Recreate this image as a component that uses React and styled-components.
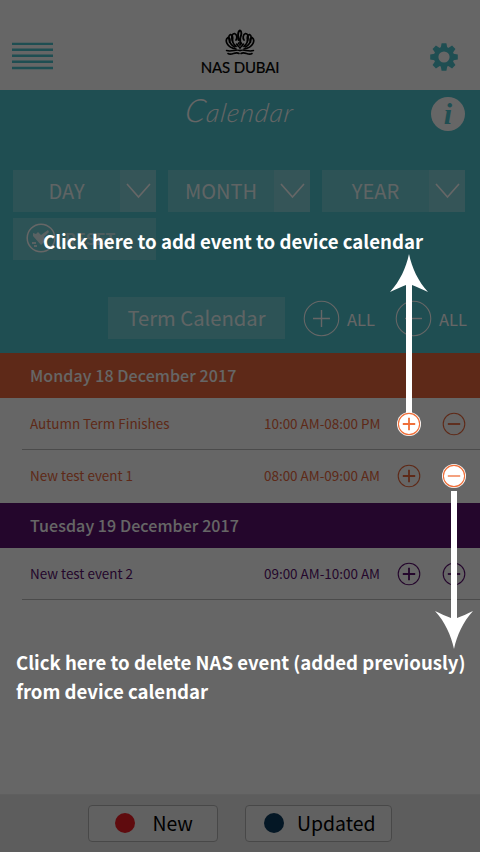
import React from "react";
import styled, { createGlobalStyle } from "styled-components";

const Global = createGlobalStyle`
  *, *::before, *::after { box-sizing: border-box; }
  body { margin: 0; background: #666; }
`;

const Screen = styled.main`
  position: relative;
  width: 480px;
  height: 852px;
  overflow: hidden;
  display: flex;
  flex-direction: column;
  background: #fff;
  font-family: "Noto Sans CJK SC", "Open Sans", sans-serif;
`;

const TopBar = styled.header`
  height: 90px;
  flex: none;
  display: grid;
  grid-template-columns: 41px 1fr 41px;
  padding: 28px 15px 0 12px;
`;

const MenuIcon = styled.svg`
  display: block;
  width: 41px;
  height: 28px;
  margin-top: 14px;
`;

const Brand = styled.div`
  display: flex;
  flex-direction: column;
  align-items: center;
  padding-left: 3px;
`;

const Crown = styled.svg`
  display: block;
  width: 32px;
  height: 29px;
`;

const BrandName = styled.span`
  font: 400 15px/20px Lato, sans-serif;
  letter-spacing: -0.15px;
  white-space: nowrap;
  color: #000;
  -webkit-text-stroke: 0.2px #000;
`;

const GearIcon = styled.svg`
  display: block;
  width: 30px;
  height: 30px;
  margin: 14px 0 0 auto;
  margin-right: 6px;
`;

const Panel = styled.section`
  height: 263px;
  flex: none;
  background: #4ec3cd;
  color: #fff;
`;

const TitleRow = styled.div`
  height: 80px;
  display: grid;
  grid-template-columns: 60px 1fr 60px;
  padding-top: 6px;
`;

const Title = styled.h1`
  margin: -4px 0 0 0;
  height: 36px;
  text-align: center;
  font: italic 300 26px/36px Lato, sans-serif;
  letter-spacing: 1.2px;
  transform: skewX(-8deg);
  &::first-letter { font-size: 32px; }
`;

const InfoBadge = styled.span`
  width: 34px;
  height: 34px;
  margin: 1px 0 0 11px;
  border-radius: 50%;
  background: #fff;
  color: #4ec3cd;
  text-align: center;
  font: italic 700 30px/33px "Liberation Serif", serif;
`;

const Filters = styled.div`
  display: grid;
  grid-template-columns: 143px 142px 143px;
  gap: 6px 12px;
  padding-left: 13px;
`;

const Select = styled.div`
  height: 42px;
  display: grid;
  grid-template-columns: 1fr 36px;
  background: rgba(255, 255, 255, 0.2);
`;

const SelectLabel = styled.span`
  text-align: center;
  font-size: 20px;
  line-height: 41px;
  color: rgba(255, 255, 255, 0.9);
`;

const SelectArrow = styled.span`
  display: flex;
  background: rgba(255, 255, 255, 0.14);
`;

const ResetButton = styled.div`
  height: 42px;
  display: flex;
  align-items: center;
  padding: 0 0 2px 13px;
  gap: 9px;
  background: rgba(255, 255, 255, 0.2);
  font-size: 16px;
  font-weight: 700;
  line-height: 40px;
  color: rgba(255, 255, 255, 0.6);
`;

const Actions = styled.div`
  display: flex;
  align-items: center;
  margin: 37px 0 0 108px;
  height: 42px;
`;

const TermButton = styled.div`
  width: 177px;
  flex: none;
  height: 42px;
  text-align: center;
  font-size: 20.2px;
  line-height: 41px;
  background: rgba(255, 255, 255, 0.2);
  color: rgba(255, 255, 255, 0.9);
`;

const AllAction = styled.div`
  display: flex;
  align-items: center;
  width: 92px;
  flex: none;
  gap: 7px;
  font-size: 16.5px;
  line-height: 40px;
  &:nth-child(2) { margin-left: 18px; }
`;

const AllLabel = styled.span`
  padding-top: 2px;
`;

const DayHeading = styled.h2`
  margin: 0;
  height: 45px;
  flex: none;
  padding-left: 30px;
  font-size: 16px;
  font-weight: 500;
  line-height: 44px;
  letter-spacing: 0.08px;
  color: #fff;
  background: ${(p) => p.$color};
`;

const EventRow = styled.div`
  height: ${(p) => p.$height}px;
  flex: none;
  margin-left: 22px;
  padding-left: 8px;
  display: grid;
  grid-template-columns: 1fr 121px 47px 48px;
  font-size: 13.45px;
  line-height: 51px;
  white-space: nowrap;
  color: ${(p) => p.$color};
  border-bottom: ${(p) => (p.$line ? "1px solid #bbb" : "0")};
`;

const EventTime = styled.span`
  width: 117px;
`;

const IconCell = styled.span`
  display: flex;
  align-items: center;
  justify-content: center;
  padding-right: ${(p) => p.$inset || 0}px;
  height: 52px;
`;

const Legend = styled.footer`
  height: 58px;
  margin-top: auto;
  display: flex;
  gap: 27px;
  padding: 10px 0 0 88px;
  background: #e9e9e9;
  border-top: 1px solid #ededed;
`;

const LegendItem = styled.div`
  width: ${(p) => p.$width}px;
  height: 37px;
  display: flex;
  align-items: center;
  padding: 0 0 1px ${(p) => p.$pad}px;
  gap: ${(p) => p.$gap}px;
  border: 1.5px solid #b5b5b5;
  border-radius: 4px;
  background: #f2f2f2;
  color: #000;
  font-size: 19.4px;
  line-height: 32px;
`;

const Dot = styled.i`
  width: 20px;
  height: 20px;
  border-radius: 50%;
  background: ${(p) => p.$color};
`;

const Overlay = styled.div`
  position: absolute;
  inset: 0;
  background: rgba(0, 0, 0, 0.6);
`;

const Hint = styled.p`
  position: absolute;
  left: ${(p) => p.$x}px;
  top: ${(p) => p.$y}px;
  margin: 0;
  color: #fff;
  font-size: 18.6px;
  font-weight: 700;
  line-height: 29px;
  white-space: nowrap;
`;

const Pointer = styled.svg`
  position: absolute;
  left: ${(p) => p.$x}px;
  top: ${(p) => p.$y}px;
  display: block;
`;

const Spot = styled.span`
  position: absolute;
  left: ${(p) => p.$x}px;
  top: ${(p) => p.$y}px;
  width: 24px;
  height: 24px;
  border-radius: 50%;
  display: flex;
  background: #fff;
  color: #ef6f3a;
`;

const Glyph = styled.svg`
  display: block;
  flex: none;
`;

function RoundIcon({ plus, size = 24, thin, radius = 10.8, weight = 1.8 }) {
  const arm = thin ? 5.5 : 6.2;
  return (
    <Glyph width={size} height={size} viewBox="0 0 24 24" fill="none" stroke="currentColor">
      <circle cx="12" cy="12" r={thin ? 11.2 : radius} strokeWidth={thin ? 0.7 : 1.1} />
      <path
        d={`M${12 - arm} 12H${12 + arm}${plus ? `M12 ${12 - arm}V${12 + arm}` : ""}`}
        strokeWidth={thin ? 0.9 : weight}
      />
    </Glyph>
  );
}

function Gear() {
  return (
    <GearIcon viewBox="-15 -15 30 30">
      <g fill="#4ec3cd">
        {[0, 45, 90, 135, 180, 225, 270, 315].map((a) => (
          <path key={a} transform={`rotate(${a})`} d="M-3.5 -8L-2.4 -13.8H2.4L3.5 -8Z" />
        ))}
      </g>
      <circle r="7.9" fill="none" stroke="#4ec3cd" strokeWidth="4.6" />
    </GearIcon>
  );
}

function CrownMark() {
  return (
    <Crown viewBox="0 0 32 29" fill="none" stroke="#000" strokeWidth="1.5" strokeLinecap="round">
      <path d="M14.500 12C13.500 8 14 3 16 2.500C18 3 17.500 7 16.500 9C15.500 11 17 14 16 17" strokeWidth="1.9" />
      {[1, -1].map((s) => (
        <g key={s} transform={`translate(16 0) scale(${s} 1)`}>
          <path d="M4 12C2.500 10 3 6.500 5.500 5.500C9.500 6 9 14 4 18.500" strokeWidth="1.7" />
          <path d="M7.500 12.500C7 10 7.500 7 9.500 6.500C12.500 8 11.500 15.500 5.500 19" strokeWidth="1.6" />
          <path d="M10.500 14C9.500 11.500 10.500 9.500 12 9.500C15.500 12 13.500 19.500 4 21" strokeWidth="1.7" />
          <path d="M0 20L3.500 16M1 14.500L3 18" strokeWidth="1.4" />
          <path d="M0 22.500C4 21 8 24 13.500 22.500" strokeWidth="1.5" />
          <path d="M1 25.500C5 23 8 28 12 25.500" strokeWidth="1.6" />
        </g>
      ))}
    </Crown>
  );
}

const bars = [1.9, 7.8, 13.7, 19.8, 26];
const ORANGE = "#eb683c";
const PURPLE = "#5a0f6e";

function Event({ name, time, color, height, line }) {
  return (
    <EventRow $color={color} $height={height} $line={line}>
      <span>{name}</span>
      <EventTime>{time}</EventTime>
      <IconCell><RoundIcon plus /></IconCell>
      <IconCell $inset={4}><RoundIcon /></IconCell>
    </EventRow>
  );
}

export default function App() {
  return (
    <Screen>
      <Global />
      <TopBar>
        <MenuIcon viewBox="0 0 41 28" stroke="#4ec3cd" strokeWidth="2.4">
          {bars.map((y) => <path key={y} d={`M0 ${y}H41`} />)}
        </MenuIcon>
        <Brand>
          <CrownMark />
          <BrandName>NAS DUBAI</BrandName>
        </Brand>
        <Gear />
      </TopBar>

      <Panel>
        <TitleRow>
          <span />
          <Title>Calendar</Title>
          <InfoBadge>i</InfoBadge>
        </TitleRow>
        <Filters>
          {["DAY", "MONTH", "YEAR"].map((label) => (
            <Select key={label}>
              <SelectLabel>{label}</SelectLabel>
              <SelectArrow>
                <Glyph width="36" height="42" fill="none" stroke="#fff" strokeWidth="1.6">
                  <path d="M7 14L18.500 27L30 14" />
                </Glyph>
              </SelectArrow>
            </Select>
          ))}
          <ResetButton>
            <Glyph width="30" height="30" viewBox="0 0 30 30">
              <circle cx="15" cy="15" r="13.8" fill="none" stroke="#fff" strokeWidth="1.5" />
              <g fill="#fff" opacity="0.8">
                <path d="M7 10L10 11L12 9L15 12L22 7L23 9L18 14L20 17L15 22L7 13Z" />
                <path d="M6 19H10V21H6ZM8 22H11V24H8Z" />
              </g>
            </Glyph>
            RESET
          </ResetButton>
        </Filters>
        <Actions>
          <TermButton>Term Calendar</TermButton>
          <AllAction><RoundIcon plus thin size={37} /><AllLabel>ALL</AllLabel></AllAction>
          <AllAction><RoundIcon thin size={37} /><AllLabel>ALL</AllLabel></AllAction>
        </Actions>
      </Panel>

      <DayHeading $color="#eb683c">Monday 18 December 2017</DayHeading>
      <Event name="Autumn Term Finishes" time="10:00 AM-08:00 PM" color={ORANGE} height={52} line />
      <Event name="New test event 1" time="08:00 AM-09:00 AM" color={ORANGE} height={53} />
      <DayHeading $color="#5a0f6e">Tuesday 19 December 2017</DayHeading>
      <Event name="New test event 2" time="09:00 AM-10:00 AM" color={PURPLE} height={52} line />

      <Legend>
        <LegendItem $width={130} $pad={25.5} $gap={18}><Dot $color="#ed1c24" />New</LegendItem>
        <LegendItem $width={147} $pad={18} $gap={13}><Dot $color="#0c3a5c" />Updated</LegendItem>
      </Legend>

      <Overlay>
        <Hint $x={43} $y={226}>Click here to add event to device calendar</Hint>
        <Pointer $x={389} $y={254} width="40" height="160" fill="#fff">
          <path d="M20 0C23 14 29 27 39 38C33 35 28 33 23 31V160H17V31C12 33 7 35 1 38C11 27 17 14 20 0Z" />
        </Pointer>
        <Spot $x={397} $y={412}><RoundIcon plus radius={10.6} /></Spot>
        <Spot $x={442} $y={464}><RoundIcon radius={10.6} weight={1.3} /></Spot>
        <Pointer $x={434} $y={491} width="40" height="158" fill="#fff">
          <path d="M20 158C23 144 29 131 39 120C33 123 28 125 23 127V0H17V127C12 125 7 123 1 120C11 131 17 144 20 158Z" />
        </Pointer>
        <Hint $x={16} $y={647}>
          Click here to delete NAS event (added previously)<br />from device calendar
        </Hint>
      </Overlay>
    </Screen>
  );
}
